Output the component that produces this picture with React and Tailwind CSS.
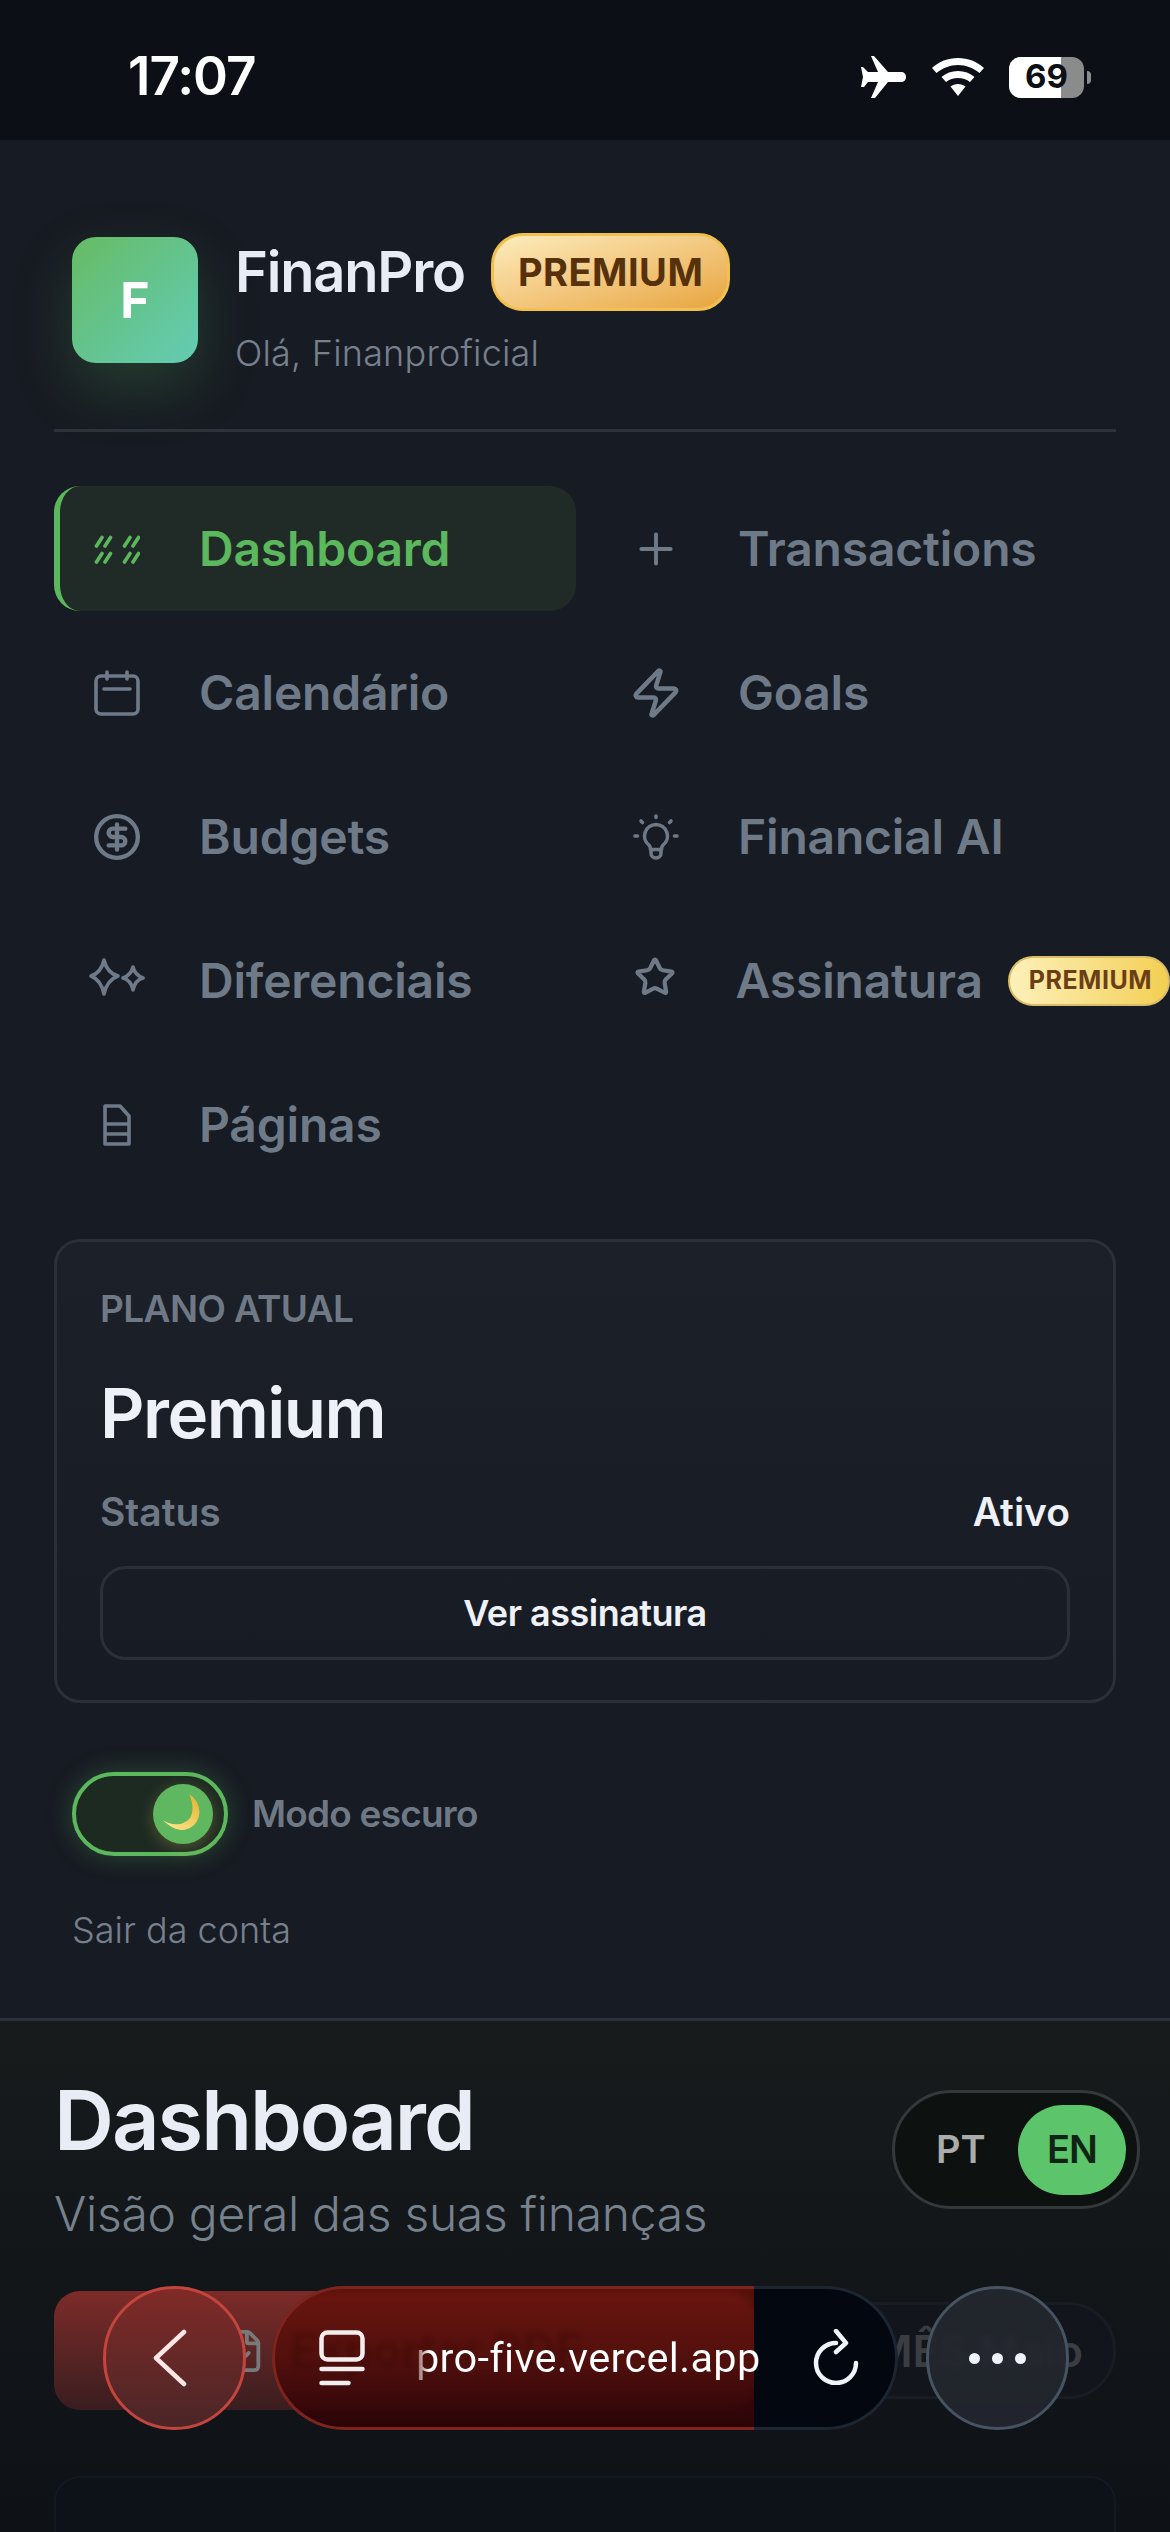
import { CircleDollarSign, FileCheck, Plus, Zap, Star } from "lucide-react";

const font = { fontFamily: "Inter, sans-serif" };

function HashIcon() {
  return (
    <svg width="46" height="30" viewBox="0 0 46 30" fill="none" stroke="currentColor" strokeWidth="3.6" strokeLinecap="round">
      <path d="M2.500 12 8 3.500M11 12l5.500-8.500M2.500 28 8 19.500M11 28l5.500-8.500M30.500 12 36 3.500M39 12l5.500-8.500M30.500 28 36 19.500M39 28l5.500-8.500" />
    </svg>
  );
}

function CalendarIcon() {
  return (
    <svg width="46" height="46" viewBox="0 0 46 46" fill="none" stroke="currentColor" strokeWidth="3.6" strokeLinecap="round" strokeLinejoin="round">
      <rect x="2" y="6" width="42" height="38" rx="5" />
      <path d="M13 2v7M33 2v7M10 19h26" />
    </svg>
  );
}

function SparkleIcon() {
  return (
    <svg width="56" height="38" viewBox="0 0 56 38" fill="none" stroke="currentColor" strokeWidth="3.6" strokeLinejoin="round" className="-mt-2">
      <path d="M15 2Q18 15 29 18 18 22 15 36 12 22 2 18 12 15 15 2Z" />
      <path d="M44 9Q46 17 54 20 46 22 44 32 42 22 34 20 42 17 44 9Z" />
    </svg>
  );
}

function PageIcon() {
  return (
    <svg width="28" height="42" viewBox="0 0 28 42" fill="none" stroke="currentColor" strokeWidth="3.600" strokeLinejoin="round">
      <path d="M2 2h15l9 10v28H2Z" />
      <path d="M3 20h22M3 30h22" />
    </svg>
  );
}

function BulbIcon() {
  return (
    <svg width="46" height="46" viewBox="0 0 46 46" fill="none" stroke="currentColor" strokeWidth="3.600" strokeLinecap="round" strokeLinejoin="round">
      <path d="M23 2v1.500M8 7l1.500 1.500M38 7l-1.500 1.500M2 22h2.500M41.500 22H44" />
      <path d="M23 10.500a11.500 11.500 0 0 0-7 20.600c1.400 1.100 1.500 2.400 1.500 4.400h11c0-2 .1-3.300 1.500-4.400a11.500 11.500 0 0 0-7-20.600Z" />
      <path d="M18 36v3a5 5 0 0 0 10 0v-3" />
    </svg>
  );
}

function MoonIcon() {
  return (
    <svg width="42" height="42" viewBox="0 0 42 42">
      <defs>
        <linearGradient id="moon" x1="0.2" y1="1" x2="0.9" y2="0.2">
          <stop offset="0" stopColor="#fde68a" />
          <stop offset="1" stopColor="#eab93e" />
        </linearGradient>
      </defs>
      <path d="M27 1c9 6 13 16 8.500 26C31 37 16 43 1 27c10 7 21 5 27-2 4-6 3-16-1-24Z" fill="url(#moon)" />
    </svg>
  );
}

function PlaneIcon() {
  return (
    <svg width="46" height="42" viewBox="0 0 46 42" fill="white">
      <path d="M11 0h3l14 16h13c3 0 5 2 5 5s-2 5-5 5H28L15 42h-4l7-16H8l-4 5H1l2-10-2-10h2l5 5h10L11 0Z" />
    </svg>
  );
}

function WifiIcon() {
  return (
    <svg width="52" height="38" viewBox="0 0 52 38" fill="white">
      <path d="M26 0c10 0 19 3.500 26 10l-4.500 5C41.500 10 34 7 26 7S10.500 10 4.500 15L0 10C7 3.500 16 0 26 0Z" />
      <path d="M26 13c6.500 0 12 2.300 16.500 6l-4.500 5c-3.300-2.700-7.500-4-12-4s-8.700 1.300-12 4l-4.500-5C14 15.300 19.500 13 26 13Z" />
      <path d="M26 26c3 0 5.500 1 7.500 2.500L26 38l-7.500-9.500C20.500 27 23 26 26 26Z" />
    </svg>
  );
}

function NavItem({ icon, label, active, badge }) {
  return (
    <div
      className={
        active
          ? "flex h-[125px] w-[522px] items-center rounded-[26px] border-l-[6px] border-[#5cb85c] bg-[#202b28] pl-[29px]"
          : "flex h-[125px] w-[577px] items-center rounded-[26px] pl-[35px]"
      }
    >
      <span className={active ? "flex w-14 justify-center text-[#5cb85c]" : "flex w-14 justify-center text-[#6f7a89]"}>{icon}</span>
      <span className={active ? "ml-[54px] text-[48px] font-semibold tracking-[-0.2px] text-[#5cb85c]" : "ml-[54px] text-[48px] font-semibold tracking-[-0.2px] text-[#6f7a89]"}>
        {label}
      </span>
      {badge && (
        <span className="ml-[25px] flex h-[50px] shrink-0 items-center rounded-[25px] border-2 border-[#d9bd6a] bg-gradient-to-r from-[#fdf1b8] to-[#f3cf50] pl-[19px] pr-[16px] text-[25px] font-bold tracking-[0.5px] text-[#6b3f16]">
          PREMIUM
        </span>
      )}
    </div>
  );
}

export default function App() {
  return (
    <div style={font} className="relative h-[2532px] w-[1170px] overflow-hidden bg-[#0e1116]">
      {/* status bar */}
      <div className="flex h-[140px] items-center justify-between bg-[#0c0f16] pl-[128px] pr-[79px] pt-[14px]">
        <span className="text-[53px] font-semibold tracking-[-1px] text-white">17:07</span>
        <div className="flex items-center">
          <PlaneIcon />
          <span className="ml-[26px]"><WifiIcon /></span>
          <div className="relative ml-[25px] flex h-[41px] w-[75px] items-center justify-center overflow-hidden rounded-[12px] bg-[#8b8b8b]">
            <span className="absolute inset-y-0 left-0 w-[52px] bg-white" />
            <span className="relative text-[33px] font-bold text-[#0c0f16]">69</span>
          </div>
          <span className="ml-[3px] h-[13px] w-[4px] rounded-r-full bg-[#8b8b8b]" />
        </div>
      </div>

      {/* sidebar */}
      <div className="h-[1881px] border-b-[3px] border-[#2b303a] bg-[#171b23] px-[54px]">
        <div className="relative flex h-[292px] border-b-[3px] border-[#2d323b] pl-[18px] pt-[97px]">
          <div className="flex h-[126px] w-[126px] items-center justify-center rounded-[24px] bg-gradient-to-br from-[#66bb62] to-[#63ccb4] text-[50px] font-bold text-white shadow-[0_24px_60px_rgba(92,184,92,0.22)]">
            F
          </div>
          <div className="ml-[37px]">
            <div className="-mt-[7px] flex items-center">
              <span className="text-[56px] font-semibold tracking-[-1.2px] text-[#e8ecf5]">FinanPro</span>
              <span className="ml-[26px] flex h-[78px] items-center rounded-[32px] border-[3px] border-[#f2c04e] bg-gradient-to-br from-[#fcecbb] to-[#e8a53b] px-[24px] text-[38px] font-bold tracking-[0.5px] text-[#56310c]">
                PREMIUM
              </span>
            </div>
            <div className="mt-[12px] text-[36px] font-light tracking-[0.2px] text-[#77818e]">Olá, Finanproficial</div>
          </div>
        </div>

        <div className="mt-[54px] grid grid-cols-[522px_577px] gap-x-[17px] gap-y-[19px]">
          <NavItem active icon={<HashIcon />} label="Dashboard" />
          <NavItem icon={<Plus size={50} strokeWidth={1.9} />} label="Transactions" />
          <NavItem icon={<CalendarIcon />} label="Calendário" />
          <NavItem icon={<Zap size={54} strokeWidth={2} />} label="Goals" />
          <NavItem icon={<CircleDollarSign size={50} strokeWidth={2.1} />} label="Budgets" />
          <NavItem icon={<BulbIcon />} label="Financial AI" />
          <NavItem icon={<SparkleIcon />} label="Diferenciais" />
          <NavItem icon={<Star size={42} strokeWidth={2.4} className="-mt-2" />} label="Assinatura" badge />
          <NavItem icon={<PageIcon />} label="Páginas" />
        </div>

        <div className="mt-[52px] h-[464px] rounded-[26px] border-[3px] border-[#2b2f38] bg-gradient-to-b from-[#1c2029] to-[#171b23] px-[43px] pt-[46px]">
          <div className="text-[37px] font-semibold leading-[42px] tracking-[-0.6px] text-[#6f7986]">PLANO ATUAL</div>
          <div className="mt-[42px] text-[69px] font-semibold leading-[82px] tracking-[-1.5px] text-[#eef1f8]">Premium</div>
          <div className="mt-[35px] flex items-center justify-between text-[39px] font-semibold leading-[46px] tracking-[0px]">
            <span className="text-[#6f7986]">Status</span>
            <span className="text-[#eef1f8]">Ativo</span>
          </div>
          <div className="mt-[31px] flex h-[94px] items-center justify-center rounded-[26px] border-[3px] border-[#2b2f38] text-[36px] font-semibold tracking-[-0.5px] text-[#eef1f8]">
            Ver assinatura
          </div>
        </div>

        <div className="mt-[69px] flex items-center pl-[18px]">
          <div className="flex h-[84px] w-[156px] items-center justify-end rounded-[42px] border-[4px] border-[#5cb85c] bg-[#1c2a22] pr-[11px] shadow-[0_0_26px_rgba(92,184,92,0.3)]">
            <span className="flex h-[60px] w-[60px] items-center justify-center rounded-full bg-[#5fb760] shadow-[0_4px_16px_rgba(240,210,90,0.25)]">
              <MoonIcon />
            </span>
          </div>
          <span className="ml-[24px] text-[37px] font-semibold tracking-[-0.8px] text-[#6f7986]">Modo escuro</span>
        </div>
        <div className="mt-[47px] pl-[18px] text-[36px] font-light text-[#77818e]">Sair da conta</div>
      </div>

      {/* main */}
      <div className="h-[511px] bg-gradient-to-b from-[#181b1c] to-[#0e1116] px-[54px] pt-[52px]">
        <div className="relative">
          <div className="text-[83px] font-semibold leading-[94px] tracking-[-2px] text-[#e8edf5]">Dashboard</div>
          <div className="mt-[18px] text-[48px] font-light leading-[58px] tracking-[-0.3px] text-[#77828f]">Visão geral das suas finanças</div>
          <div className="absolute right-[-24px] top-[17px] flex h-[119px] w-[248px] items-center rounded-[60px] border-[3px] border-[#33383a] bg-[#0d1110] pl-[41px] pr-[11px]">
            <span className="text-[38px] font-semibold text-[#a9acaa]">PT</span>
            <span className="ml-auto flex h-[90px] w-[108px] items-center justify-center rounded-[45px] bg-[#5cc46b] text-[38px] font-semibold tracking-[-1px] text-[#0f2414]">EN</span>
          </div>
        </div>
        <div className="mt-[48px] flex items-center justify-between">
          <div className="flex h-[119px] w-[700px] items-center rounded-[26px] bg-gradient-to-b from-[#7d2b28] to-[#3a1d1f] pl-[166px] text-[46px] font-semibold text-[#160a0c]">
            <FileCheck size={46} strokeWidth={2} className="mr-[24px] shrink-0 text-[#77797a]" />
            Exportar PDF
          </div>
          <div className="flex h-[97px] w-[335px] items-center justify-end rounded-[48px] border-[3px] border-[#191d23] bg-[#12161c] pr-[30px] text-[44px] font-semibold text-[#3a3d42]">
            MÊS Maio
          </div>
        </div>
        <div className="mt-[66px] h-[200px] rounded-[26px] border-[2px] border-[#141820] bg-[#0d1118]" />
      </div>

      {/* browser toolbar */}
      <div className="absolute left-[103px] top-[2286px] flex h-[144px] w-[143px] items-center justify-center rounded-full border-[3px] border-[#c4453e] bg-gradient-to-b from-[#802a26] to-[#4b2527] text-[#fde7e5]">
        <svg width="34" height="58" viewBox="0 0 34 58" fill="none" stroke="currentColor" strokeWidth="4.500" strokeLinecap="round" strokeLinejoin="round" className="mr-[10px]">
          <path d="M31 3 3 29l28 26" />
        </svg>
      </div>
      <div className="absolute left-[272px] top-[2286px] flex h-[144px] w-[626px] items-center text-white">
        <span className="absolute inset-y-0 left-0 w-[482px] rounded-l-[72px] border-y-[3px] border-l-[3px] border-[#7c241d] bg-gradient-to-b from-[#651008]/80 via-[#520c08]/80 to-[#2f0306]/90 backdrop-blur-[3px]" />
        <span className="absolute inset-y-0 right-0 w-[144px] rounded-r-[72px] border-y-[3px] border-r-[3px] border-[#1c2633] bg-[#03070f]" />
        <svg width="46" height="56" viewBox="0 0 46 56" fill="none" stroke="#f2eeee" strokeWidth="4.500" strokeLinecap="round" strokeLinejoin="round" className="relative ml-[47px] shrink-0">
          <rect x="2.500" y="2.500" width="41" height="27" rx="6" />
          <path d="M2.500 39h41M2.500 53h27" />
        </svg>
        <span className="relative ml-[51px] bg-gradient-to-r from-white/30 via-white via-[4%] to-white bg-clip-text font-['Roboto',sans-serif] text-[41.500px] tracking-[0.3px] text-transparent">pro-five.vercel.app</span>
        <svg width="46" height="56" viewBox="0 0 46 56" fill="none" stroke="#f0f4fb" strokeWidth="4.500" strokeLinecap="round" strokeLinejoin="round" className="absolute left-[541px] top-[43px]">
          <path d="M23 14a20 20 0 1 0 20 20M23 2l10 12-10 9" />
        </svg>
      </div>
      <div className="absolute left-[926px] top-[2286px] flex h-[144px] w-[143px] items-center justify-center gap-[12px] rounded-full border-[3px] border-[#465363] bg-[#23272f]/90 backdrop-blur-[3px]">
        <span className="h-[11px] w-[11px] rounded-full bg-[#eef2fb]" />
        <span className="h-[11px] w-[11px] rounded-full bg-[#eef2fb]" />
        <span className="h-[11px] w-[11px] rounded-full bg-[#eef2fb]" />
      </div>
    </div>
  );
}
